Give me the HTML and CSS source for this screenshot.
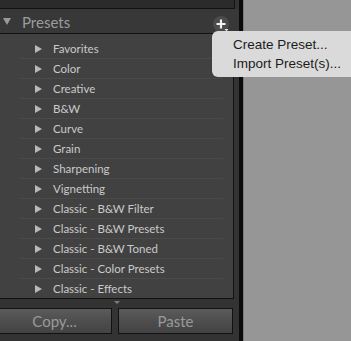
FILE: index.html
```html
<!DOCTYPE html>
<html>
<head>
<meta charset="utf-8">
<link rel="stylesheet" href="styles.css">
</head>
<body>
<div class="app">
  <div class="panel">
    <div class="prev"></div>
    <div class="header">
      <span class="disclosure"></span>
      <span class="title">Presets</span>
      <span class="add">
        <svg width="18" height="18" viewBox="0 0 18 18">
          <circle cx="8" cy="8" r="8" fill="#4b4b4b"/>
          <path d="M8 3.5v9M3.5 8h9" stroke="#f2f2f2" stroke-width="2.2"/>
          <path d="M11.5 13h4l-2 2.5z" fill="#e0e0e0"/>
        </svg>
      </span>
    </div>
    <div class="list">
      <div class="row"><span class="tri"></span><span class="label">Favorites</span></div>
      <div class="row"><span class="tri"></span><span class="label">Color</span></div>
      <div class="row"><span class="tri"></span><span class="label">Creative</span></div>
      <div class="row"><span class="tri"></span><span class="label">B&amp;W</span></div>
      <div class="row"><span class="tri"></span><span class="label">Curve</span></div>
      <div class="row"><span class="tri"></span><span class="label">Grain</span></div>
      <div class="row"><span class="tri"></span><span class="label">Sharpening</span></div>
      <div class="row"><span class="tri"></span><span class="label">Vignetting</span></div>
      <div class="row"><span class="tri"></span><span class="label">Classic - B&amp;W Filter</span></div>
      <div class="row"><span class="tri"></span><span class="label">Classic - B&amp;W Presets</span></div>
      <div class="row"><span class="tri"></span><span class="label">Classic - B&amp;W Toned</span></div>
      <div class="row"><span class="tri"></span><span class="label">Classic - Color Presets</span></div>
      <div class="row"><span class="tri"></span><span class="label">Classic - Effects</span></div>
    </div>
    <div class="grip"><span class="grip-tri"></span></div>
    <div class="buttons">
      <div class="btn copy">Copy...</div>
      <div class="btn paste">Paste</div>
    </div>
  </div>
  <div class="sep"></div>
  <div class="canvas"></div>
  <div class="menu">
    <div class="item">Create Preset...</div>
    <div class="item">Import Preset(s)...</div>
  </div>
</div>
</body>
</html>
```

FILE: styles.css
```css
html, body {
  margin: 0;
  padding: 0;
  background: #969696;
}
.app {
  position: relative;
  display: flex;
  width: 351px;
  height: 341px;
  overflow: hidden;
}
.panel {
  width: 239px;
  flex: none;
  background: #333333;
  display: flex;
  flex-direction: column;
}
.prev {
  height: 8px;
  width: 234px;
  flex: none;
  background: #2b2b2b;
  border-bottom: 1px solid #121212;
  border-right: 1px solid #121212;
  box-sizing: content-box;
}
.header {
  height: 24px;
  flex: none;
  background: #383838;
  border-bottom: 1px solid #111;
  display: flex;
  align-items: center;
  position: relative;
}
.disclosure {
  width: 0;
  height: 0;
  margin-left: 3px;
  margin-top: 1px;
  border-left: 4px solid transparent;
  border-right: 4px solid transparent;
  border-top: 7px solid #9a9a9a;
}
.title {
  margin-left: 11px;
  padding-top: 2px;
  font-family: Lato, "Open Sans", sans-serif;
  font-size: 15px;
  color: #9c9c9c;
  line-height: 22px;
}
.add {
  position: absolute;
  left: 213px;
  top: 7px;
  width: 18px;
  height: 18px;
}
.add svg { display: block; }
.list {
  width: 233px;
  height: 259px;
  flex: none;
  box-sizing: content-box;
  background: #414141;
  border-right: 1px solid #121212;
  border-bottom: 1px solid #121212;
  padding-top: 5px;
  overflow: hidden;
}
.row {
  height: 19px;
  border-bottom: 1px solid #4a4a4a;
  margin-left: 20px;
  margin-right: 10px;
  display: flex;
  align-items: center;
}
.tri {
  width: 0;
  height: 0;
  margin-left: 15px;
  border-top: 4px solid transparent;
  border-bottom: 4px solid transparent;
  border-left: 7px solid #b9b9b9;
}
.label {
  margin-left: 11px;
  font-family: Lato, "Open Sans", sans-serif;
  font-size: 11.5px;
  color: #cacaca;
  white-space: nowrap;
}
.grip {
  height: 9px;
  flex: none;
  display: flex;
  justify-content: center;
  width: 233px;
}
.grip-tri {
  margin-top: 2px;
  width: 0;
  height: 0;
  border-left: 3px solid transparent;
  border-right: 3px solid transparent;
  border-top: 3px solid #7a7a7a;
}
.buttons {
  display: flex;
  flex: none;
  gap: 6px;
  margin-left: -3px;
  width: 237px;
}
.btn {
  height: 24px;
  border: 1px solid #111;
  background: linear-gradient(#5b5b5b, #4f4f4f 45%, #434343);
  font-family: Lato, "Open Sans", sans-serif;
  font-size: 15px;
  color: #9a9a9a;
  display: flex;
  align-items: center;
  justify-content: center;
}
.copy { width: 113px; }
.paste { width: 113px; }
.sep {
  width: 4px;
  flex: none;
  background: #0b0b0b;
  border-right: 1px solid #7c7c7c;
}
.canvas {
  flex: 1;
  background: #969696;
}
.menu {
  position: absolute;
  left: 212px;
  top: 31px;
  width: 150px;
  height: 46px;
  box-sizing: border-box;
  padding: 4px 0 0 21px;
  background: #dadada;
  border-radius: 6px;
  font-family: "Liberation Sans", Arial, sans-serif;
  font-size: 13.5px;
  color: #1c1c1c;
}
.item {
  height: 19px;
  line-height: 19px;
  white-space: nowrap;
}
```
